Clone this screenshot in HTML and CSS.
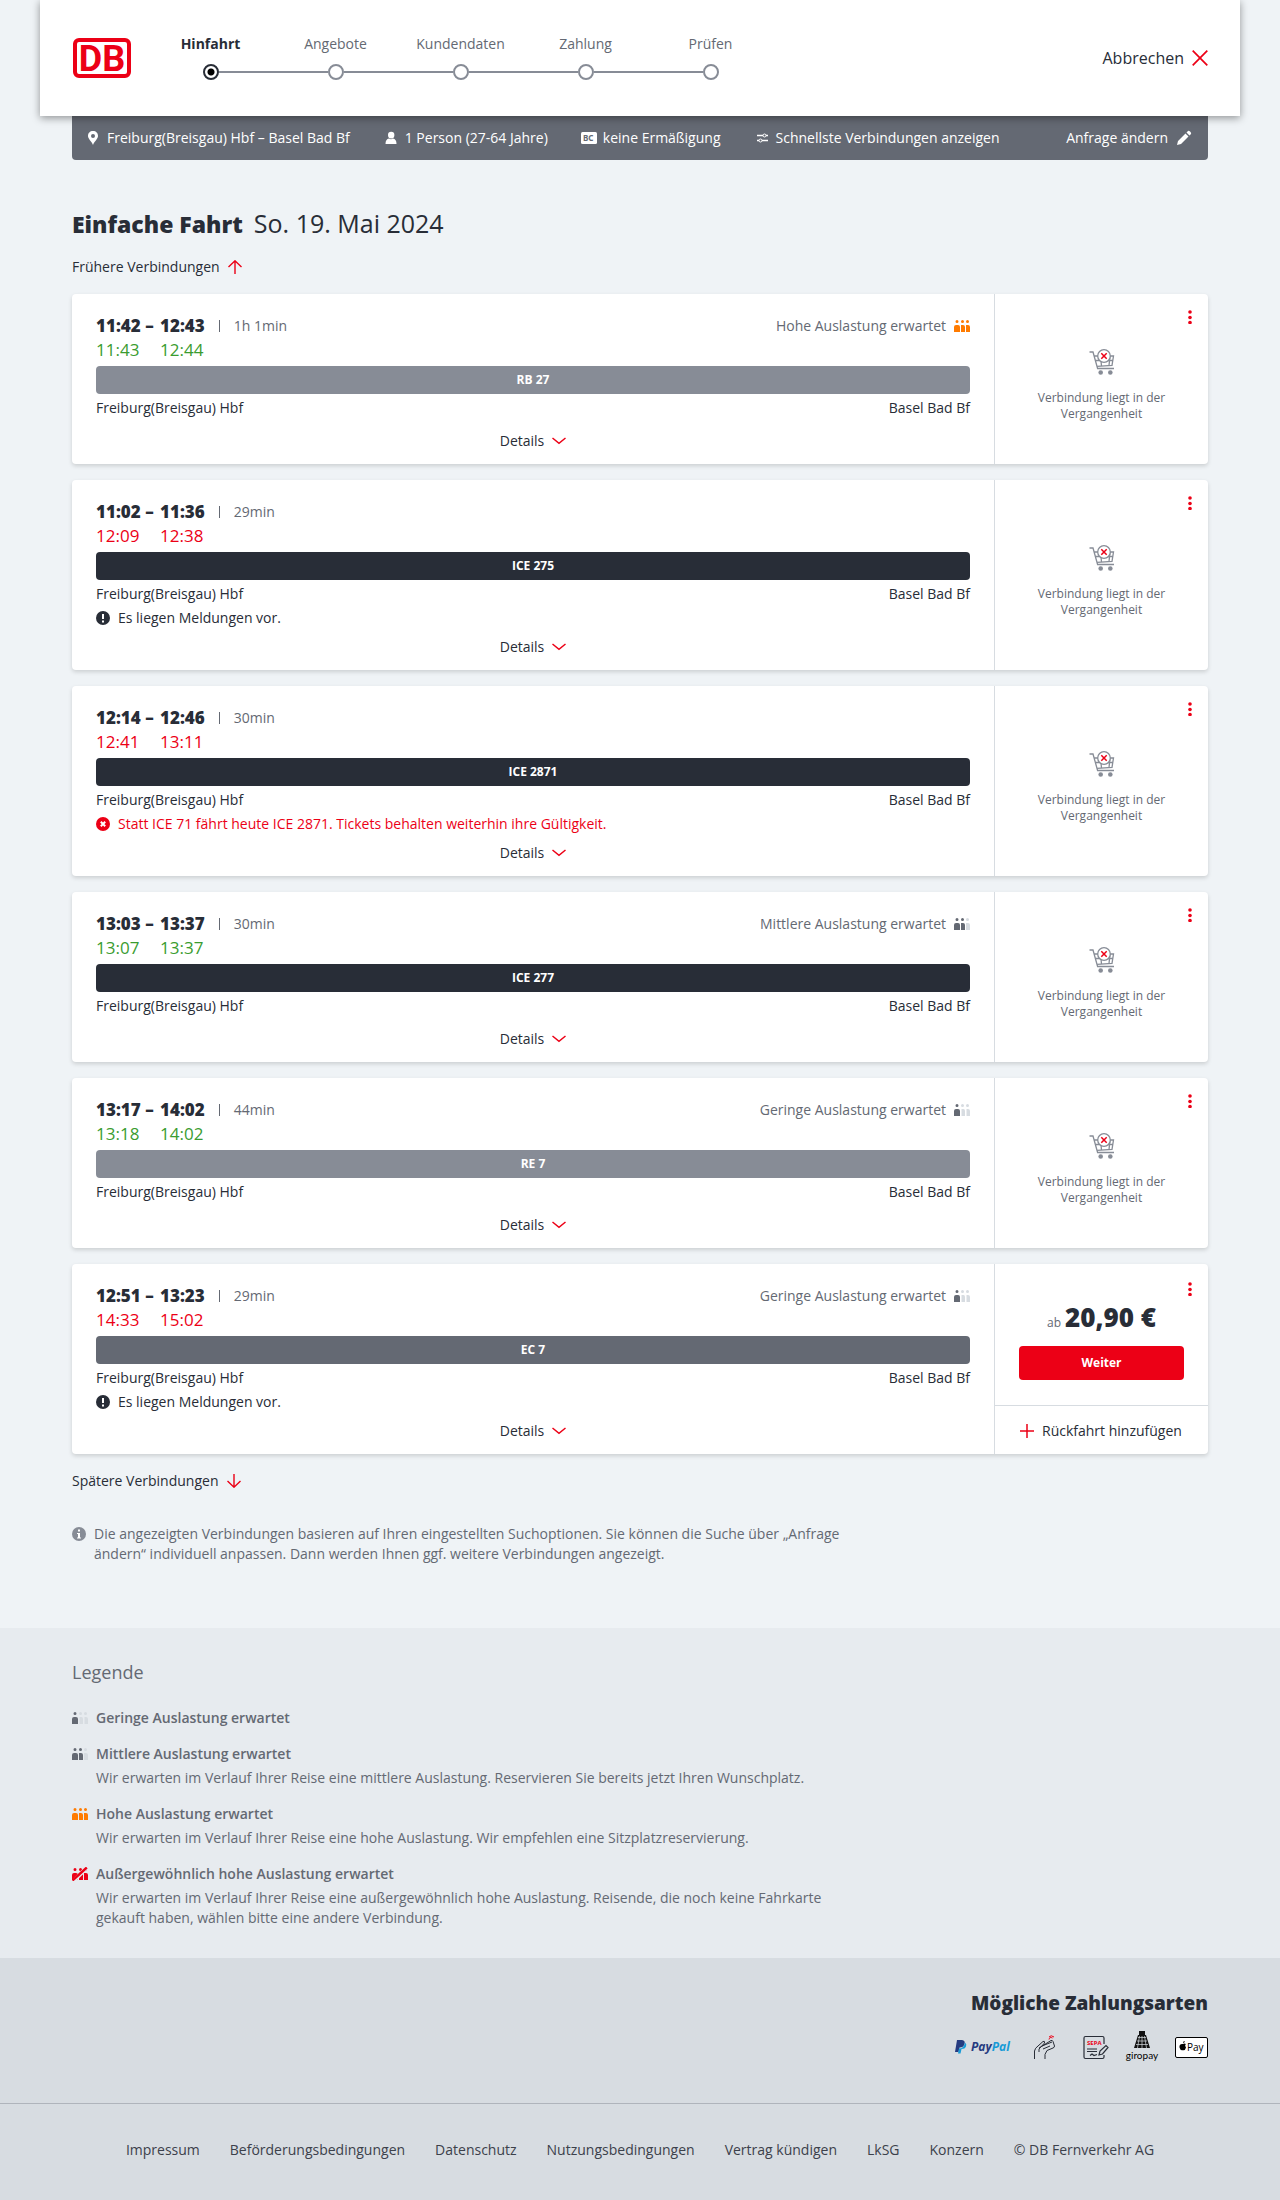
FILE: index.html
```html
<!DOCTYPE html>
<html lang="de">
	<head>
		<meta charset="utf-8">
		<title>Hinfahrt - bahn.de</title>
		<meta name="viewport" content="width=device-width, initial-scale=1">
		<link rel="stylesheet" href="styles.css">
	</head>
	<body>
		<svg class="sprite" aria-hidden="true">
			<symbol id="cart" viewBox="0 0 26 26">
				<g fill="none" stroke="#878c96" stroke-width="1.3">
					<path d="M0.5 3H4L8.6 19.5H25M5 7H24.5L23 16.3L8 17.3M6.2 11.5H24M11.5 7L12.5 17M21 7L20 16.5"/>
					<circle cx="15" cy="7" r="6.3" fill="#fff"/>
				</g>
				<circle cx="11.7" cy="23.5" r="2.3" fill="#878c96"/>
				<circle cx="21.3" cy="23.5" r="2.3" fill="#878c96"/>
				<path d="M12.3 4.3L17.7 9.7M17.7 4.3L12.3 9.7" stroke="#ec0016" stroke-width="1.5"/>
			</symbol>
			<symbol id="chevron" viewBox="0 0 14 14">
				<path d="M0.5 4L7 9.3L13.5 4" fill="none" stroke="#ec0016" stroke-width="1.5"/>
			</symbol>
			<symbol id="dots" viewBox="0 0 4 14">
				<g fill="#ec0016"><circle cx="2" cy="2" r="1.8"/><circle cx="2" cy="7.5" r="1.8"/><circle cx="2" cy="12.5" r="1.8"/></g>
			</symbol>
			<symbol id="alert" viewBox="0 0 14 14">
				<circle cx="7" cy="7" r="7" fill="#282d37"/>
				<path d="M6 3H8V8H6ZM6 9.5H8V11.5H6Z" fill="#fff"/>
			</symbol>
			<symbol id="one" viewBox="0 0 16 12">
				<path fill="currentColor" d="M1.5 1.5a1.5 1.5 0 0 1 3 0a1.5 1.5 0 0 1-3 0M0 12V7Q0 5 2 5H4Q6 5 6 7V12Z"/>
				<path class="off" d="M7 1.5a1.5 1.5 0 0 1 3 0a1.5 1.5 0 0 1-3 0M7.5 12V5H9.5Q11 5 11 7V12ZM12 1.5a1.5 1.5 0 0 1 3 0a1.5 1.5 0 0 1-3 0M12.5 12V5H14Q16 5 16 7V12Z"/>
			</symbol>
			<symbol id="two" viewBox="0 0 16 12">
				<path fill="currentColor" d="M1.5 1.5a1.5 1.5 0 0 1 3 0a1.5 1.5 0 0 1-3 0M0 12V7Q0 5 2 5H4Q6 5 6 7V12ZM7 1.5a1.5 1.5 0 0 1 3 0a1.5 1.5 0 0 1-3 0M7 12V5H9Q11 5 11 7V12Z"/>
				<path class="off" d="M12 1.5a1.5 1.5 0 0 1 3 0a1.5 1.5 0 0 1-3 0M12 12V5H14Q16 5 16 7V12Z"/>
			</symbol>
			<symbol id="three" viewBox="0 0 16 12">
				<path fill="currentColor" d="M1.5 1.5a1.5 1.5 0 0 1 3 0a1.5 1.5 0 0 1-3 0M0 12V7Q0 5 2 5H4Q6 5 6 7V12ZM7 1.5a1.5 1.5 0 0 1 3 0a1.5 1.5 0 0 1-3 0M7 12V5H9Q11 5 11 7V12ZM12 1.5a1.5 1.5 0 0 1 3 0a1.5 1.5 0 0 1-3 0M12 12V5H14Q16 5 16 7V12Z"/>
			</symbol>
		</svg>

		<header class="top">
			<a class="logo" href="#" aria-label="Deutsche Bahn"><svg width="58" height="40" viewBox="0 0 58 40"><rect x="2" y="2" width="54" height="36" rx="4" fill="#fff" stroke="#ec0016" stroke-width="4"/><text x="29" y="33">DB</text></svg></a>
			<ol class="steps">
				<li class="current">Hinfahrt</li>
				<li>Angebote</li>
				<li>Kundendaten</li>
				<li>Zahlung</li>
				<li>Prüfen</li>
			</ol>
			<a class="cancel" href="#">Abbrechen <svg width="16" height="16" viewBox="0 0 16 16"><path d="M0.7 0.7L15.3 15.3M15.3 0.7L0.7 15.3" fill="none" stroke="#ec0016" stroke-width="1.7"/></svg></a>
		</header>

		<main class="page">
			<div class="query">
				<span><svg width="16" height="16" viewBox="0 0 16 16"><path fill="#fff" fill-rule="evenodd" d="M8 1C5 1 3 3 3 6C3 9 6.5 11 8 15C9.5 11 13 9 13 6C13 3 11 1 8 1ZM8 4A2 2 0 1 1 8 8A2 2 0 0 1 8 4Z"/></svg>Freiburg(Breisgau) Hbf – Basel Bad Bf</span>
				<span><svg width="16" height="16" viewBox="0 0 16 16"><path fill="#fff" d="M5 5A3.2 3.2 0 1 1 11.4 5A3.2 3.5 0 0 1 5 5ZM2.5 14Q2.5 9 6 8.5Q8 10 10 8.5Q13.5 9 13.5 14Z"/></svg>1 Person (27-64 Jahre)</span>
				<span><svg width="16" height="16" viewBox="0 0 16 16"><rect y="2" width="16" height="12" rx="1.5" fill="#fff"/><text class="bc" x="2" y="11">BC</text></svg>keine Ermäßigung</span>
				<span><svg width="16" height="16" viewBox="0 0 16 16"><path d="M3 5.5H14M3 10.5H14" stroke="#fff" stroke-width="1.5"/><circle cx="10.5" cy="5.5" r="1.5" fill="#646973" stroke="#fff"/><circle cx="6.5" cy="10.5" r="1.5" fill="#646973" stroke="#fff"/></svg>Schnellste Verbindungen anzeigen</span>
				<a href="#">Anfrage ändern<svg width="16" height="16" viewBox="0 0 16 16"><path fill="#fff" d="M1 15L2 11L9.5 3.5L12.5 6.5L5 14ZM10.5 2.5L12 1Q13 0.5 14 1.5L14.5 2Q15.5 3 15 4L13.5 5.5Z"/></svg></a>
			</div>

			<h1>Einfache Fahrt <span>So. 19. Mai 2024</span></h1>
			<a class="more" href="#">Frühere Verbindungen <svg width="14" height="14" viewBox="0 0 14 14"><path d="M7 14V1M0.5 7L7 0.8L13.5 7" fill="none" stroke="#ec0016" stroke-width="1.4"/></svg></a>

			<section class="trips" aria-label="Verbindungen">
				<article class="trip">
					<div class="info">
						<div class="head">
							<div class="times"><b>11:42 –</b><b>12:43</b><span class="duration">1h 1min</span><span class="ontime">11:43</span><span class="ontime">12:44</span></div>
							<span class="load">Hohe Auslastung erwartet <svg class="high" width="16" height="12"><use href="#three"/></svg></span>
						</div>
						<div class="train regional">RB 27</div>
						<div class="stations"><span>Freiburg(Breisgau) Hbf</span><span>Basel Bad Bf</span></div>
						<button class="details" type="button">Details <svg width="14" height="14"><use href="#chevron"/></svg></button>
					</div>
					<div class="offer past">
						<button class="menu" type="button" aria-label="Optionen"><svg width="4" height="14"><use href="#dots"/></svg></button>
						<svg width="26" height="26"><use href="#cart"/></svg>
						<p>Verbindung liegt in der Vergangenheit</p>
					</div>
				</article>

				<article class="trip">
					<div class="info">
						<div class="head">
							<div class="times"><b>11:02 –</b><b>11:36</b><span class="duration">29min</span><span class="late">12:09</span><span class="late">12:38</span></div>
						</div>
						<div class="train">ICE 275</div>
						<div class="stations"><span>Freiburg(Breisgau) Hbf</span><span>Basel Bad Bf</span></div>
						<p class="notice"><svg width="14" height="14"><use href="#alert"/></svg>Es liegen Meldungen vor.</p>
						<button class="details" type="button">Details <svg width="14" height="14"><use href="#chevron"/></svg></button>
					</div>
					<div class="offer past">
						<button class="menu" type="button" aria-label="Optionen"><svg width="4" height="14"><use href="#dots"/></svg></button>
						<svg width="26" height="26"><use href="#cart"/></svg>
						<p>Verbindung liegt in der Vergangenheit</p>
					</div>
				</article>

				<article class="trip">
					<div class="info">
						<div class="head">
							<div class="times"><b>12:14 –</b><b>12:46</b><span class="duration">30min</span><span class="late">12:41</span><span class="late">13:11</span></div>
						</div>
						<div class="train">ICE 2871</div>
						<div class="stations"><span>Freiburg(Breisgau) Hbf</span><span>Basel Bad Bf</span></div>
						<p class="notice late"><svg width="14" height="14" viewBox="0 0 14 14"><circle cx="7" cy="7" r="7" fill="#ec0016"/><path d="M4.8 4.8L9.2 9.2M9.2 4.8L4.8 9.2" stroke="#fff" stroke-width="2"/></svg>Statt ICE 71 fährt heute ICE 2871. Tickets behalten weiterhin ihre Gültigkeit.</p>
						<button class="details" type="button">Details <svg width="14" height="14"><use href="#chevron"/></svg></button>
					</div>
					<div class="offer past">
						<button class="menu" type="button" aria-label="Optionen"><svg width="4" height="14"><use href="#dots"/></svg></button>
						<svg width="26" height="26"><use href="#cart"/></svg>
						<p>Verbindung liegt in der Vergangenheit</p>
					</div>
				</article>

				<article class="trip">
					<div class="info">
						<div class="head">
							<div class="times"><b>13:03 –</b><b>13:37</b><span class="duration">30min</span><span class="ontime">13:07</span><span class="ontime">13:37</span></div>
							<span class="load">Mittlere Auslastung erwartet <svg width="16" height="12"><use href="#two"/></svg></span>
						</div>
						<div class="train">ICE 277</div>
						<div class="stations"><span>Freiburg(Breisgau) Hbf</span><span>Basel Bad Bf</span></div>
						<button class="details" type="button">Details <svg width="14" height="14"><use href="#chevron"/></svg></button>
					</div>
					<div class="offer past">
						<button class="menu" type="button" aria-label="Optionen"><svg width="4" height="14"><use href="#dots"/></svg></button>
						<svg width="26" height="26"><use href="#cart"/></svg>
						<p>Verbindung liegt in der Vergangenheit</p>
					</div>
				</article>

				<article class="trip">
					<div class="info">
						<div class="head">
							<div class="times"><b>13:17 –</b><b>14:02</b><span class="duration">44min</span><span class="ontime">13:18</span><span class="ontime">14:02</span></div>
							<span class="load">Geringe Auslastung erwartet <svg width="16" height="12"><use href="#one"/></svg></span>
						</div>
						<div class="train regional">RE 7</div>
						<div class="stations"><span>Freiburg(Breisgau) Hbf</span><span>Basel Bad Bf</span></div>
						<button class="details" type="button">Details <svg width="14" height="14"><use href="#chevron"/></svg></button>
					</div>
					<div class="offer past">
						<button class="menu" type="button" aria-label="Optionen"><svg width="4" height="14"><use href="#dots"/></svg></button>
						<svg width="26" height="26"><use href="#cart"/></svg>
						<p>Verbindung liegt in der Vergangenheit</p>
					</div>
				</article>

				<article class="trip">
					<div class="info">
						<div class="head">
							<div class="times"><b>12:51 –</b><b>13:23</b><span class="duration">29min</span><span class="late">14:33</span><span class="late">15:02</span></div>
							<span class="load">Geringe Auslastung erwartet <svg width="16" height="12"><use href="#one"/></svg></span>
						</div>
						<div class="train eurocity">EC 7</div>
						<div class="stations"><span>Freiburg(Breisgau) Hbf</span><span>Basel Bad Bf</span></div>
						<p class="notice"><svg width="14" height="14"><use href="#alert"/></svg>Es liegen Meldungen vor.</p>
						<button class="details" type="button">Details <svg width="14" height="14"><use href="#chevron"/></svg></button>
					</div>
					<div class="offer">
						<button class="menu" type="button" aria-label="Optionen"><svg width="4" height="14"><use href="#dots"/></svg></button>
						<div class="buy">
							<p class="price"><small>ab</small> 20,90 €</p>
							<button class="next" type="button">Weiter</button>
						</div>
						<a class="return" href="#"><svg width="14" height="14" viewBox="0 0 14 14"><path d="M7 0V14M0 7H14" stroke="#ec0016" stroke-width="1.5"/></svg>Rückfahrt hinzufügen</a>
					</div>
				</article>
			</section>

			<a class="more" href="#">Spätere Verbindungen <svg width="14" height="14" viewBox="0 0 14 14"><path d="M7 0V13M0.5 7L7 13.2L13.5 7" fill="none" stroke="#ec0016" stroke-width="1.4"/></svg></a>
			<p class="hint"><svg width="14" height="14" viewBox="0 0 14 14"><circle cx="7" cy="7" r="7" fill="#878c96"/><path d="M6 2.5H8V4.5H6ZM5 6H8V10.5H9V11.5H5V10.5H6V7H5Z" fill="#fff"/></svg><span>Die angezeigten Verbindungen basieren auf Ihren eingestellten Suchoptionen. Sie können die Suche über „Anfrage ändern“ individuell anpassen. Dann werden Ihnen ggf. weitere Verbindungen angezeigt.</span></p>
		</main>

		<section class="legend">
			<h2>Legende</h2>
			<dl>
				<dt><svg width="16" height="12"><use href="#one"/></svg>Geringe Auslastung erwartet</dt>
				<dt><svg width="16" height="12"><use href="#two"/></svg>Mittlere Auslastung erwartet</dt>
				<dd>Wir erwarten im Verlauf Ihrer Reise eine mittlere Auslastung. Reservieren Sie bereits jetzt Ihren Wunschplatz.</dd>
				<dt><svg class="high" width="16" height="12"><use href="#three"/></svg>Hohe Auslastung erwartet</dt>
				<dd>Wir erwarten im Verlauf Ihrer Reise eine hohe Auslastung. Wir empfehlen eine Sitzplatzreservierung.</dd>
				<dt><svg class="full" width="16" height="14" viewBox="0 -1 16 14"><use href="#three" width="16" height="12"/><path d="M0.5 14L16 -1.5" stroke="#e7ebef" stroke-width="4"/><path d="M0.5 12.5L14.8 -0.5" stroke="#ec0016" stroke-width="2.4"/></svg>Außergewöhnlich hohe Auslastung erwartet</dt>
				<dd>Wir erwarten im Verlauf Ihrer Reise eine außergewöhnlich hohe Auslastung. Reisende, die noch keine Fahrkarte gekauft haben, wählen bitte eine andere Verbindung.</dd>
			</dl>
		</section>

		<footer>
			<div class="payment">
				<h2>Mögliche Zahlungsarten</h2>
				<div class="methods">
					<svg width="62" height="16" viewBox="0 0 62 16" role="img" aria-label="PayPal"><path fill="#253b80" d="M2 1H7Q10.5 1.5 9.5 5Q8.5 8.5 4.5 8.5L3.5 13H0Z"/><path fill="#179bd7" d="M10 3.5Q12 5 11 7.5Q10 10 6.5 10L5.5 14.5H3L4 9.5Q9 9.5 10 3.5Z"/><text class="paypal" x="16" y="12"><tspan fill="#253b80">Pay</tspan><tspan fill="#179bd7">Pal</tspan></text></svg>
					<svg width="34" height="26" viewBox="0 0 34 26" role="img" aria-label="Kreditkarte"><g fill="none" stroke="#282d37"><path d="M1.5 25V17Q2 14 5 12L10 7.5Q12 6.5 11.5 9L6 15V18M6 14L18 6.5Q19.5 6 20 7.5L21.5 12Q21.5 13.5 20 14L14 16.5Q11 20 12 25M9 12L19 8M10 15L17 12"/></g><g fill="none" stroke="#ec0016"><path d="M16 5.5Q16.5 2.5 19.5 4M16 3Q18 0.5 21 3"/></g></svg>
					<svg width="26" height="26" viewBox="0 0 26 26" role="img" aria-label="SEPA-Lastschrift"><path d="M21 10V4Q21 2.5 19.5 2.5H2.5Q1 2.5 1 4V23Q1 24.5 2.5 24.5H19.5Q21 24.5 21 23V21M4 15H14M4 17.5H14M7 21.5L9 20L11 21.5L14 20.5M16 21L17 17L23 11.5L25 13.5L19.5 20Z" fill="none" stroke="#282d37" stroke-width="1.2"/><text class="sepa" x="4" y="11">SEPA</text></svg>
					<svg width="34" height="32" viewBox="0 0 34 32" role="img" aria-label="giropay"><path d="M14 0H20V4H21L25 17H9L13 4H14Z" fill="#111"/><path d="M13 6.5H21M12 10H22M11 13.5H23M14.5 5L12.5 17M17 5V17M19.5 5L21.5 17" stroke="#d7dce1" stroke-width="0.7"/><text class="giro" x="17" y="28">giropay</text></svg>
					<svg width="33" height="21" viewBox="0 0 33 21" role="img" aria-label="Apple Pay"><rect x="0.5" y="0.5" width="32" height="20" rx="1.5" fill="#fff" stroke="#000"/><path d="M8 6Q8 4 9.8 4Q9.8 6 8 6ZM8 7Q9.5 5.8 10.8 7Q9.3 8.5 11 10.5Q10 14 8 13.2Q5.5 14 4.5 10.5Q4 6.5 8 7Z"/><text class="apple" x="12" y="14">Pay</text></svg>
				</div>
			</div>
			<nav class="links" aria-label="Rechtliches">
				<a href="#">Impressum</a>
				<a href="#">Beförderungsbedingungen</a>
				<a href="#">Datenschutz</a>
				<a href="#">Nutzungsbedingungen</a>
				<a href="#">Vertrag kündigen</a>
				<a href="#">LkSG</a>
				<a href="#">Konzern</a>
				<span>© DB Fernverkehr AG</span>
			</nav>
		</footer>
	</body>
</html>
```

FILE: styles.css
```css
*,
*::before,
*::after {
	box-sizing: border-box;
}
body {
	margin: 0;
	background: #eff3f6;
	color: #282d37;
	font: 14px/24px "Open Sans", "Noto Sans", sans-serif;
}
h1, h2, p, ol, dl, dd {
	margin: 0;
	padding: 0;
}
a {
	color: inherit;
	text-decoration: none;
}
button {
	border: 0;
	padding: 0;
	background: none;
	color: inherit;
	font: inherit;
	cursor: pointer;
}
svg {
	flex: none;
}
.sprite {
	position: absolute;
	width: 0;
	height: 0;
}
.off {
	fill: #d7dce1;
}

/* header */
.top {
	position: relative;
	display: flex;
	align-items: center;
	height: 116px;
	margin: 0 40px;
	padding: 0 32px;
	background: #fff;
	box-shadow: 0 2px 8px rgba(0, 0, 0, 0.4);
}
.logo {
	display: flex;
	margin-left: 1px;
}
.logo svg {
	overflow: visible;
}
.logo text {
	font: bold 36px Roboto, sans-serif;
	fill: #ec0016;
	text-anchor: middle;
}
.steps {
	display: flex;
	margin: 0 0 4px 17px;
	list-style: none;
	color: #646973;
}
.steps li {
	position: relative;
	width: 125px;
	padding-bottom: 24px;
	text-align: center;
}
.steps li::before {
	content: "";
	position: absolute;
	bottom: 0;
	left: 55px;
	width: 16px;
	height: 16px;
	border: 2px solid #878c96;
	border-radius: 50%;
}
.steps li:not(:last-child)::after {
	content: "";
	position: absolute;
	bottom: 7px;
	left: 71px;
	width: 109px;
	height: 2px;
	background: #878c96;
}
.steps .current {
	color: #282d37;
	font-weight: bold;
}
.steps .current::before {
	border-color: #282d37;
	background: radial-gradient(circle, #000 3px, #fff 4px);
}
.cancel {
	display: flex;
	align-items: center;
	gap: 8px;
	margin-left: auto;
	font-size: 16px;
}

/* search summary */
.page {
	padding: 0 72px;
}
.query {
	display: flex;
	align-items: center;
	gap: 33px;
	height: 44px;
	padding: 0 16px 0 13px;
	border-radius: 0 0 4px 4px;
	background: #646973;
	color: #fff;
}
.query span,
.query a {
	display: flex;
	align-items: center;
	gap: 6px;
	white-space: nowrap;
}
.query a {
	gap: 8px;
	margin-left: auto;
}
.bc {
	font: bold 8px "Noto Sans", sans-serif;
	fill: #646973;
}
h1 {
	margin-top: 47px;
	font-size: 23px;
	font-weight: 800;
	line-height: 32px;
}
h1 span {
	margin-left: 5px;
	font-size: 25px;
	font-weight: normal;
}
.more {
	display: flex;
	align-items: center;
	gap: 8px;
	width: max-content;
	margin: 15px 0;
}

/* connections */
.trips {
	display: grid;
	gap: 16px;
}
.trip {
	display: grid;
	grid-template-columns: 1fr 214px;
	border-radius: 4px;
	background: #fff;
	box-shadow: 0 2px 4px rgba(0, 0, 0, 0.15);
}
.info {
	padding: 20px 24px 11px;
}
.head {
	display: flex;
	justify-content: space-between;
	color: #646973;
}
.times {
	display: grid;
	grid-template-columns: 64px auto auto;
	font-size: 17px;
}
.times b {
	color: #282d37;
	font-weight: 800;
}
.duration {
	margin-left: 14px;
	font-size: 14px;
}
.duration::before {
	content: "";
	display: inline-block;
	width: 1px;
	height: 12px;
	margin-right: 14px;
	background: #646973;
	vertical-align: -1px;
}
.times .ontime,
.times .late {
	grid-column: 1;
}
.times .ontime + .ontime,
.times .late + .late {
	grid-column: 2 / 4;
}
.ontime {
	color: #3a9c30;
}
.late {
	color: #ec0016;
}
.load {
	display: flex;
	align-items: center;
	gap: 8px;
	height: 24px;
}
.high {
	color: #ff7b00;
}
.full {
	color: #ec0016;
}
.train {
	margin: 4px 0 2px;
	border-radius: 4px;
	background: #282d37;
	color: #fff;
	font-size: 12px;
	font-weight: bold;
	line-height: 28px;
	text-align: center;
}
.regional {
	background: #878c96;
}
.eurocity {
	background: #646973;
}
.stations {
	display: flex;
	justify-content: space-between;
}
.notice {
	display: flex;
	align-items: center;
	gap: 8px;
}
.details {
	display: flex;
	align-items: center;
	gap: 8px;
	margin: 9px auto 0;
}
.notice + .details {
	margin-top: 5px;
}
.offer {
	position: relative;
	display: flex;
	flex-direction: column;
	border-left: 1px solid #d7dce1;
}
.menu {
	position: absolute;
	top: 18px;
	right: 16px;
	display: flex;
}
.past .menu {
	top: 16px;
}
.past {
	align-items: center;
	justify-content: center;
	padding: 13px 32px 0;
	color: #646973;
	font-size: 12px;
	line-height: 16px;
	text-align: center;
}
.past p {
	margin-top: 15px;
}
.buy {
	flex: 1;
	padding: 37px 24px 0;
	text-align: center;
}
.price {
	display: flex;
	align-items: baseline;
	justify-content: center;
	gap: 4px;
	font-size: 26px;
	font-weight: 800;
	line-height: 32px;
}
.price small {
	color: #646973;
	font-size: 12px;
	font-weight: normal;
}
.next {
	width: 100%;
	margin-top: 7px;
	border-radius: 4px;
	background: #ec0016;
	color: #fff;
	font-size: 12px;
	font-weight: bold;
	line-height: 34px;
}
.return {
	display: flex;
	align-items: center;
	gap: 8px;
	height: 49px;
	padding: 2px 0 0 25px;
	border-top: 1px solid #d7dce1;
}
.hint {
	display: flex;
	gap: 8px;
	max-width: 770px;
	margin-top: 31px;
	padding-bottom: 64px;
	color: #646973;
	line-height: 20px;
}
.hint svg {
	margin-top: 3px;
}

/* legend */
.legend {
	padding: 32px 72px 30px;
	background: #e7ebef;
	color: #646973;
}
.legend h2 {
	margin-bottom: 22px;
	font-size: 18px;
	font-weight: normal;
}
.legend dl {
	max-width: 770px;
}
.legend dt {
	display: flex;
	align-items: center;
	gap: 8px;
	margin-top: 12px;
	font-weight: 600;
}
.legend dd {
	margin-left: 24px;
	padding-top: 2px;
	line-height: 20px;
}
.legend dd + dt {
	margin-top: 14px;
}

/* footer */
footer {
	background: #d7dce1;
}
.payment {
	padding: 29px 72px 40px;
	border-bottom: 1px solid #afb4bb;
}
.payment h2 {
	font-size: 19px;
	font-weight: 800;
	line-height: 32px;
	text-align: right;
}
.methods {
	display: flex;
	align-items: center;
	justify-content: flex-end;
	gap: 16px;
	margin-top: 12px;
}
.methods svg {
	overflow: visible;
}
.paypal {
	font: italic bold 12px "Open Sans", sans-serif;
}
.sepa {
	font: bold 6px "Open Sans", sans-serif;
	fill: #ec0016;
}
.giro {
	font: 10px Lato, sans-serif;
	text-anchor: middle;
}
.apple {
	font: 10px "Open Sans", sans-serif;
}
.links {
	display: flex;
	flex-wrap: wrap;
	justify-content: center;
	gap: 0 30px;
	padding: 34px 72px 39px;
	color: #3c414b;
}
```
